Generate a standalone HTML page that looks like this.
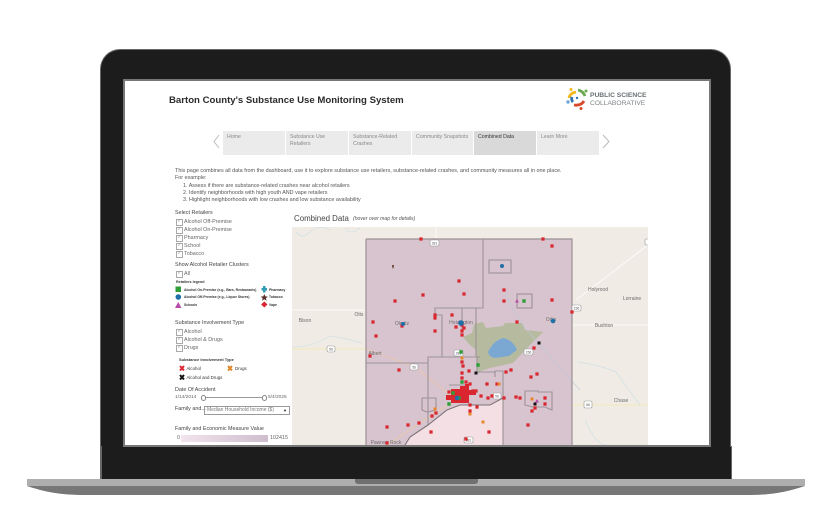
<!DOCTYPE html>
<html><head><meta charset="utf-8"><style>
html,body{margin:0;padding:0;background:#fff}
#p{position:relative;width:830px;height:531px;overflow:hidden;background:#fff;font-family:"Liberation Sans",sans-serif}
#p div,#p span.a{position:absolute}
.t{white-space:nowrap;color:#666;font-size:5.4px;line-height:7px;filter:blur(.2px)}
.h{white-space:nowrap;color:#444;font-size:5.4px;line-height:7px;filter:blur(.2px)}
.c{width:4.5px;height:4.5px;border:.7px solid #aaa;background:#fff;font:4.5px/4.5px "DejaVu Sans",sans-serif;color:#777;text-align:center}
.n{background:#ebebeb;top:131px;height:24px;width:62px;font-size:5.2px;line-height:6.5px;color:#888;box-sizing:border-box;padding:3px 0 0 4px}
.l{white-space:nowrap;color:#333;font-size:3.4px;line-height:5px;font-weight:bold}
.k{white-space:nowrap;color:#333;font-size:4.4px;line-height:5px}
</style></head><body><div id="p">
<div style="left:100px;top:49px;width:629px;height:431px;border:1.5px solid #666;border-bottom:0;border-radius:20px 20px 0 0;background:#1c1c1c"></div>
<div style="left:123px;top:79px;width:584px;height:366px;border:2px solid #777;background:#fff"></div>

<div style="left:169px;top:93.500px;font-size:9.6px;line-height:13px;font-weight:bold;color:#2b2b2b;white-space:nowrap">Barton County's Substance Use Monitoring System</div>

<svg style="position:absolute;left:566px;top:87px" width="22" height="24" viewBox="0 0 22 24">
<path d="M3 11 Q4 6 10 5" stroke="#f2b91e" stroke-width="2.800" fill="none"/>
<path d="M12 3 Q17 4 19 9" stroke="#6aa84f" stroke-width="2.800" fill="none"/>
<path d="M18 14 Q15 19 8 18" stroke="#d9482b" stroke-width="2.800" fill="none"/>
<path d="M7 15 Q5 13 6 10" stroke="#2e74b5" stroke-width="2.800" fill="none"/>
<circle cx="5" cy="2.500" r="1.500" fill="#f2b91e"/><circle cx="2" cy="15" r="1.700" fill="#6fa8dc"/><circle cx="15" cy="21.500" r="1.500" fill="#d9482b"/><circle cx="20" cy="4" r="1.500" fill="#6aa84f"/><circle cx="11" cy="11" r="1.200" fill="#2e74b5"/>
</svg>
<div style="left:590px;top:92px;font-size:6.700px;line-height:8px;color:#6a6f73;font-weight:bold;white-space:nowrap">PUBLIC SCIENCE</div>
<div style="left:590px;top:100px;font-size:6.700px;line-height:8px;color:#7f8488;white-space:nowrap">COLLABORATIVE</div>

<svg style="position:absolute;left:210px;top:133px" width="400" height="20" viewBox="0 0 400 20" fill="none" stroke="#bbb" stroke-width="1"><path d="M9 2 L4 8.500 L9 15"/><path d="M393 2 L399 8.500 L393 15"/></svg>
<div class="n" style="left:223px">Home</div>
<div class="n" style="left:286px">Substance Use<br>Retailers</div>
<div class="n" style="left:349px">Substance-Related<br>Crashes</div>
<div class="n" style="left:412px;width:61px">Community Snapshots</div>
<div class="n" style="left:474px;background:#d9d9d9;color:#333">Combined Data</div>
<div class="n" style="left:537px">Learn More</div>

<div class="t" style="left:175px;top:168px;color:#555;font-size:5.45px">This page combines all data from the dashboard, use it to explore substance use retailers, substance-related crashes, and community measures all in one place.</div>
<div class="t" style="left:175px;top:175px;color:#555">For example:</div>
<div class="t" style="left:183px;top:182.500px;color:#555">1. Assess if there are substance-related crashes near alcohol retailers</div>
<div class="t" style="left:183px;top:190px;color:#555">2. Identify neighborhoods with high youth AND vape retailers</div>
<div class="t" style="left:183px;top:197px;color:#555">3. Highlight neighborhoods with low crashes and low substance availability</div>

<div class="h" style="left:175px;top:210px">Select Retailers</div>
<div class="c" style="left:176px;top:219px">&#10003;</div><div class="t" style="left:184px;top:218.500px">Alcohol Off-Premise</div>
<div class="c" style="left:176px;top:227px">&#10003;</div><div class="t" style="left:184px;top:226.500px">Alcohol On-Premise</div>
<div class="c" style="left:176px;top:235px">&#10003;</div><div class="t" style="left:184px;top:234.500px">Pharmacy</div>
<div class="c" style="left:176px;top:243px">&#10003;</div><div class="t" style="left:184px;top:242.500px">School</div>
<div class="c" style="left:176px;top:251px">&#10003;</div><div class="t" style="left:184px;top:250.500px">Tobacco</div>
<div class="h" style="left:175px;top:262px">Show Alcohol Retailer Clusters</div>
<div class="c" style="left:176px;top:271px">&#10003;</div><div class="t" style="left:184px;top:270.500px">All</div>
<div class="l" style="left:176px;top:280px;font-size:3.700px">Retailers legend</div>
<svg style="position:absolute;left:170px;top:285px" width="110" height="26" viewBox="0 0 110 26">
<rect x="5.500" y="1.500" width="5.500" height="5.500" fill="#2f9e38"/><circle cx="8.300" cy="12" r="2.800" fill="#1f6fa8"/><path d="M8.300 17 L11.500 23 H5Z" fill="#b54aa8"/>
<path d="M91.500 3 h1.500 v-2 h2.500 v2 h1.500 v2.500 h-1.500 v2 h-2.500 v-2 h-1.500z" fill="#2f9db5"/><path d="M94.300 9 l1 2.400 2.600.2-2 1.600.7 2.500-2.300-1.400-2.300 1.400.7-2.500-2-1.600 2.600-.2z" fill="#5a2f2a"/><path d="M94.300 16.500 l3.200 3-3.200 3-3.200-3z" fill="#d9262f"/>
</svg>
<div class="l" style="left:184px;top:287.500px">Alcohol On-Premise (e.g., Bars, Restaurants)</div>
<div class="l" style="left:184px;top:294.500px">Alcohol Off-Premise (e.g., Liquor Stores)</div>
<div class="l" style="left:184px;top:302.500px">Schools</div>
<div class="l" style="left:269px;top:287.500px">Pharmacy</div>
<div class="l" style="left:269px;top:294.500px">Tobacco</div>
<div class="l" style="left:269px;top:302.500px">Vape</div>

<div class="h" style="left:175px;top:320px">Substance Involvement Type</div>
<div class="c" style="left:176px;top:329px">&#10003;</div><div class="t" style="left:184px;top:328.500px">Alcohol</div>
<div class="c" style="left:176px;top:337px">&#10003;</div><div class="t" style="left:184px;top:336.500px">Alcohol &amp; Drugs</div>
<div class="c" style="left:176px;top:345px">&#10003;</div><div class="t" style="left:184px;top:344.500px">Drugs</div>
<div class="l" style="left:179px;top:356.500px;font-size:4px">Substance Involvement Type</div>
<svg style="position:absolute;left:178px;top:364px" width="60" height="17" viewBox="0 0 60 17" fill="none" stroke-width="2">
<path d="M2 2 L6 6.500 M6 2 L2 6.500" stroke="#d9262f"/><path d="M50 2 L54 6.500 M54 2 L50 6.500" stroke="#e0852a"/><path d="M2 11 L6 15.500 M6 11 L2 15.500" stroke="#111"/>
</svg>
<div class="k" style="left:186.500px;top:365.500px">Alcohol</div>
<div class="k" style="left:235px;top:365.500px">Drugs</div>
<div class="k" style="left:186.500px;top:374.500px">Alcohol and Drugs</div>

<div class="h" style="left:175px;top:387px">Date Of Accident</div>
<div class="t" style="left:175px;top:394px;font-size:4.800px">1/14/2014</div>
<div style="left:202px;top:396.500px;width:62px;height:1.500px;background:#999"></div>
<div style="left:201px;top:394.500px;width:3px;height:4px;border:.7px solid #888;border-radius:3px;background:#fff"></div>
<div style="left:262px;top:394.500px;width:3px;height:4px;border:.7px solid #888;border-radius:3px;background:#fff"></div>
<div class="t" style="left:268px;top:394px;font-size:4.800px">5/4/2025</div>
<div class="h" style="left:175px;top:405.500px">Family and...</div>
<div class="t" style="left:204px;top:406px;width:82px;height:7px;border:.7px solid #999;color:#777;font-size:5px;padding-left:2px;line-height:7px">Median Household Income ($)<span class="a" style="right:2px;top:0;color:#222;font-size:4px">&#9660;</span></div>
<div class="h" style="left:175px;top:426px">Family and Economic Measure Value</div>
<div class="t" style="left:177px;top:434.500px">0</div>
<div style="left:181px;top:435px;width:87px;height:7px;background:linear-gradient(90deg,#f2e4ed,#cfbdcd)"></div>
<div class="t" style="left:270px;top:434.500px">102415</div>

<div style="left:294px;top:213px;font-size:7.900px;line-height:11px;color:#444;white-space:nowrap">Combined Data</div>
<div style="left:353px;top:215.500px;font-size:5.100px;line-height:7px;color:#555;font-style:italic;white-space:nowrap">(hover over map for details)</div>

<svg style="position:absolute;left:292px;top:227px" width="356" height="218" viewBox="292 227 356 218">
<rect x="292" y="227" width="356" height="218" fill="#f0ebe4"/>
<path d="M436 227V239M292 310 H366" stroke="#fafafa" stroke-width="1" fill="none"/>
<path d="M296 232 Q302 240 310 232 T330 230 M345 228 Q350 236 360 228" stroke="#cfe0e6" stroke-width=".7" fill="none"/>
<path d="M576 300 L648 245M572 325 H648" stroke="#fbfbf9" stroke-width="1" fill="none"/>
<path d="M292 349 H366" stroke="#f5e8b8" stroke-width="1" fill="none"/>
<path d="M552 405 H648" stroke="#f5e8b8" stroke-width="1" fill="none"/>
<path d="M292 347 Q310 348 330 336 Q345 338 362 343 M578 362 Q600 365 616 372 Q625 385 640 405 M585 420 Q596 445 606 445" stroke="#cfe0e6" stroke-width=".7" fill="none"/>
<rect x="366" y="239" width="206" height="206" fill="#d8c4ce"/>
<path d="M503 445 V398 L490 405 L460 405 L447 410 L428 425 L410 437 L405 445Z" fill="#f3dfe4"/>
<path d="M463 337 L472 333 L474 324 L483 322 L486 328 L503 326 L505 323 L522 323 L525 330 L543 332 L530 345 L513 363 L490 368 L478 372 L476 350 L470 345Z" fill="#b6bb9f"/>
<path d="M488 352 Q493 341 503 338 Q513 340 517 350 L509 356 L495 358 Q489 357 488 352Z" fill="#7ba8d2"/>
<path d="M366 349 L415 367 L450 395M387 445 L449 404" stroke="#ecc9a8" stroke-width=".8" fill="none"/>
<path d="M505 290 Q512 315 540 345 L580 390" stroke="#bdc7db" stroke-width=".6" fill="none"/>
<path d="M366 239 H572 V445 M366 239 V445" fill="none" stroke="#9a9096" stroke-width="1.200"/>
<g fill="none" stroke="#9d9399" stroke-width="1.100">
<path d="M366 363 H428 V425 M428 363 V357 H480 M442 357 V315 H435 V308 H483 V239 M462 308 V330 M476 308 V356"/>
<path d="M477 356 V372 H495 V377 V371 H503 V445"/>
<path d="M503 398 L490 405 L460 405 L447 410 L428 425 L410 437 L405 445" stroke="#7d7478" stroke-width="1.100"/>
<rect x="489" y="260" width="22" height="13"/><rect x="517" y="294" width="15" height="14"/>
<path d="M525 391 H538 V392 H552 V410 L545 407 H533 L525 405Z"/>
<path d="M422 398 H436 V410 L427 412 L422 410Z"/>
<path d="M449 385 H470"/>
</g>
<g fill="#fff" stroke="#999" stroke-width=".6">
<rect x="430" y="240" width="9" height="6" rx="1.500"/><rect x="327" y="346" width="8" height="6" rx="1.500"/><rect x="410" y="364" width="8" height="6" rx="1.500"/><rect x="454" y="350" width="9" height="6" rx="1.500"/><rect x="524" y="349" width="9" height="6" rx="1.500"/><rect x="493" y="393" width="8" height="6" rx="1.500"/><rect x="584" y="401" width="8" height="7" rx="1.500"/><rect x="572" y="305" width="9" height="6" rx="1.500"/><rect x="645" y="239" width="6" height="6" rx="1.500"/><rect x="464" y="437" width="9" height="6" rx="1.500"/>
</g>
<g font-family="Liberation Sans,sans-serif" font-size="3.400" fill="#555" text-anchor="middle">
<text x="434.500" y="244.500">281</text><text x="331" y="350.500">56</text><text x="414" y="368.500">56</text><text x="458.500" y="354.500">281</text><text x="528.500" y="353.500">156</text><text x="497" y="397.500">56</text><text x="588" y="406">56</text><text x="576.500" y="309.500">156</text><text x="468.500" y="441.500">281</text>
</g>
<g font-family="Liberation Sans,sans-serif" font-size="5" fill="#6c6c6c" text-anchor="middle">
<text x="305" y="322">Bison</text><text x="359" y="316">Otis</text><text x="402" y="325">Olmitz</text><text x="461" y="324">Hoisington</text><text x="375" y="355">Albert</text><text x="551" y="321">Odin</text><text x="598" y="291">Holyrood</text><text x="632" y="300">Lorraine</text><text x="604" y="327">Bushton</text><text x="621" y="402">Chase</text><text x="386" y="444">Pawnee Rock</text>
</g>
<path d="M451 389h9v-3h5v-2h4v6h7v5h-7v8h-18zM446 395h5v5h-5z" fill="#d9262f"/>
<path stroke="#d9262f" stroke-width="3.200" stroke-linecap="square" fill="none" d="M459 281h.01M423 295h.01M464 294h.01M395 301h.01M435 315h.01M435 318h.01M452 315h.01M373 322h.01M402 326h.01M456 327h.01M462 325h.01M464 328h.01M543 239h.01M552 246h.01M504 290h.01M504 301h.01M552 300h.01M517 322h.01M572 312h.01M376 336h.01M370 356h.01M399 370h.01M435 331h.01M387 427h.01M408 425h.01M419 423h.01M432 416h.01M436 413h.01M431 432h.01M387 443h.01M462 335h.01M462 331h.01M462 362h.01M463 366h.01M462 373h.01M462 378h.01M466 382h.01M469 371h.01M449 392h.01M534 348h.01M511 370h.01M506 372h.01M531 377h.01M537 374h.01M487 384h.01M497 384h.01M473 391h.01M476 391h.01M481 396h.01M488 398h.01M492 396h.01M504 398h.01M516 397h.01M520 398h.01M545 398h.01M545 404h.01M535 408h.01M532 411h.01M528 425h.01M489 432h.01M470 411h.01M466 439h.01M470 405h.01M477 407h.01M421 239h.01M470 384h.01"/>
<path stroke="#2f9e38" stroke-width="3.400" stroke-linecap="square" fill="none" d="M461 352h.01M462 382h.01M453 393h.01M449 404h.01M478 365h.01M524 301h.01M459 398h.01"/>
<path stroke="#e8872e" stroke-width="3" stroke-linecap="square" fill="none" d="M462 358h.01M435 409h.01M499 384h.01M532 399h.01M483 422h.01M470 414h.01"/>
<path stroke="#111" stroke-width="3" stroke-linecap="square" fill="none" d="M539 343h.01M476 373h.01M535 404h.01"/>
<circle cx="502" cy="266" r="2" fill="#1f6fa8"/><circle cx="553" cy="321" r="2.300" fill="#1f6fa8"/><circle cx="403" cy="324" r="2" fill="#1f6fa8"/><circle cx="461" cy="323" r="2.800" fill="#1f6fa8"/><circle cx="457" cy="398" r="2.200" fill="#1f6fa8"/>
<path d="M517 299l2 3.500h-4zM537 399l2 3.500h-4z" fill="#b54aa8"/>
<path d="M393 266l.9 2.200h-1.800z" fill="#6a4a3a"/><circle cx="393" cy="266" r="1.100" fill="#6a4a3a"/>
</svg>

<div style="left:125px;top:445px;width:584px;height:1.500px;background:#777"></div>
<div style="left:101px;top:446.500px;width:630px;height:32.500px;background:#1c1c1c"></div>
<div style="left:100px;top:446px;width:1.500px;height:33px;background:#666"></div>
<div style="left:730.500px;top:446px;width:1.500px;height:33px;background:#666"></div>
<svg style="position:absolute;left:27px;top:479px" width="778" height="16" viewBox="0 0 778 16">
<path d="M0 7 H778 C760 13 745 16 720 16 H58 C33 16 18 13 0 7Z" fill="#777"/>
<rect x="0" y="0" width="778" height="7" fill="#aeaeae"/>
<path d="M328 0 H451 V2 Q451 5 447 5 H332 Q328 5 328 2Z" fill="#707070"/>
</svg>
</div></body></html>
